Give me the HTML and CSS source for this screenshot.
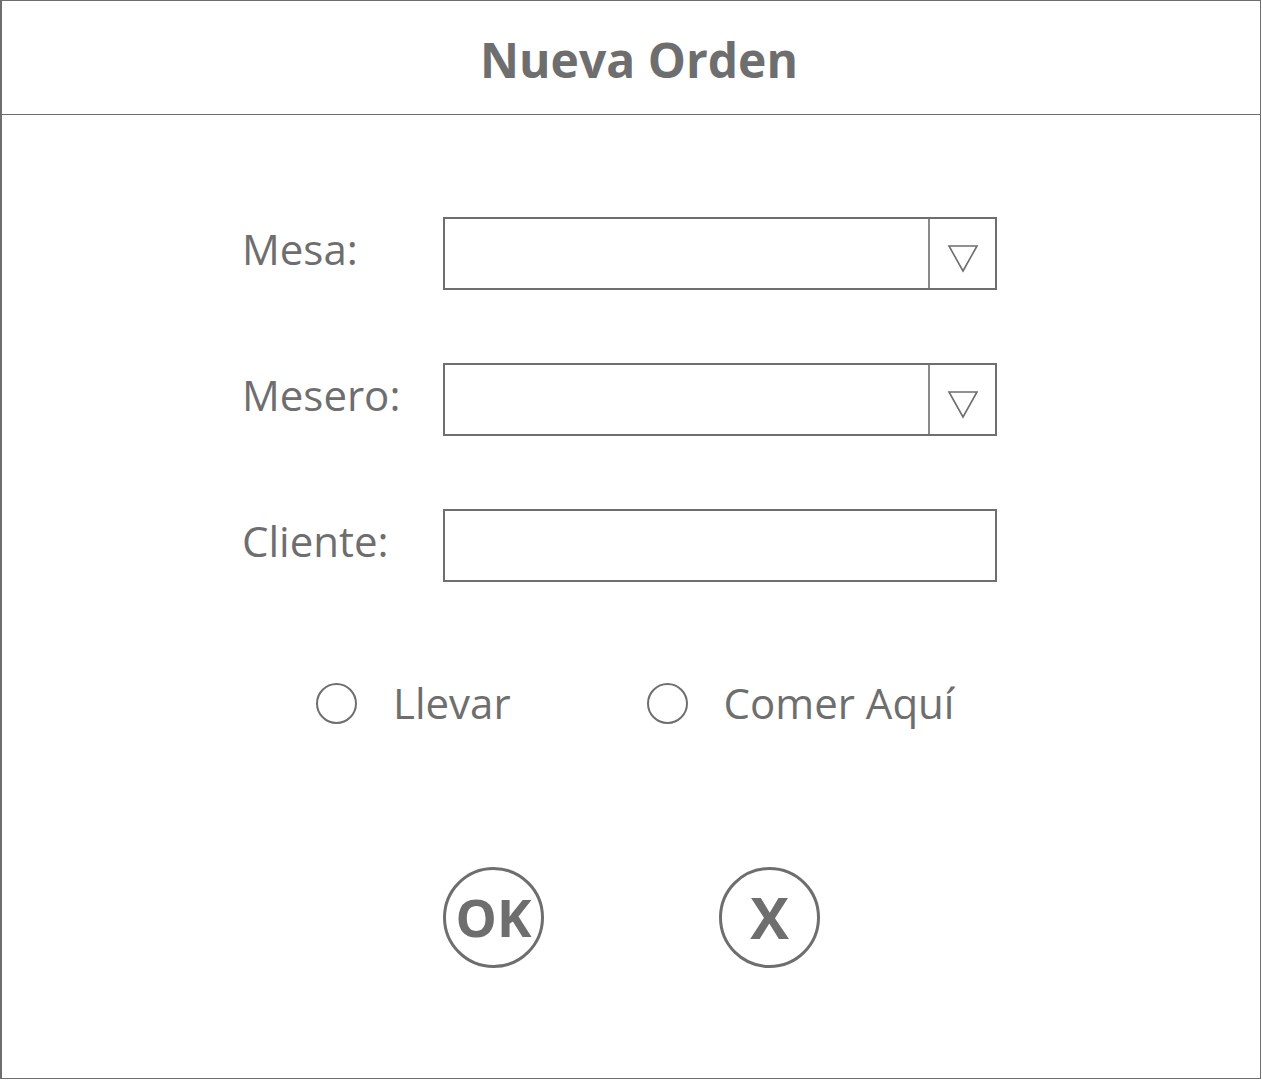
FILE: index.html
```html
<!DOCTYPE html>
<html lang="es">
<head>
<meta charset="utf-8">
<title>Nueva Orden</title>
<link rel="stylesheet" href="styles.css">
</head>
<body>
<div class="dialog">
  <header class="head"><h1 class="title">Nueva Orden</h1></header>
  <main class="content">
    <div class="form">
      <label class="label">Mesa:</label>
      <div class="field select">
        <div class="value"></div>
        <div class="arrow"><svg width="32" height="30" viewBox="0 0 32 30"><polygon points="2,3 30,3 16,28" fill="none" stroke="#6e6e6e" stroke-width="1.6" stroke-linejoin="miter"/></svg></div>
      </div>
      <label class="label">Mesero:</label>
      <div class="field select">
        <div class="value"></div>
        <div class="arrow"><svg width="32" height="30" viewBox="0 0 32 30"><polygon points="2,3 30,3 16,28" fill="none" stroke="#6e6e6e" stroke-width="1.6" stroke-linejoin="miter"/></svg></div>
      </div>
      <label class="label">Cliente:</label>
      <div class="field"></div>
    </div>
    <div class="radios">
      <div class="radio"><span class="dot"></span><span class="rtext">Llevar</span></div>
      <div class="radio second"><span class="dot"></span><span class="rtext">Comer Aquí</span></div>
    </div>
    <div class="buttons">
      <div class="btn">OK</div>
      <div class="btn btn-x">X</div>
    </div>
  </main>
</div>
</body>
</html>
```
FILE: styles.css
```css
* { box-sizing: border-box; }
html, body { margin: 0; padding: 0; background: #fff; }
body { font-family: "Open Sans", "Noto Sans", sans-serif; color: #6e6e6e; }
.dialog {
  width: 1261px;
  height: 1079px;
  border: 1px solid #6e6e6e;
  border-left-width: 2px;
  display: flex;
  flex-direction: column;
}
.head {
  height: 114px;
  border-bottom: 1px solid #6e6e6e;
  display: flex;
  align-items: center;
  justify-content: center;
}
.title {
  margin: 0;
  font-size: 48px;
  font-weight: 700;
  padding-left: 16px;
  padding-top: 4px;
}
.content { flex: 1; }
.form {
  margin-top: 102px;
  padding-left: 240px;
  display: grid;
  grid-template-columns: 201px 554px;
  row-gap: 73px;
  align-items: center;
}
.label {
  font-size: 42px;
  line-height: 73px;
  margin-top: -10px;
}
.field {
  height: 73px;
  border: 2px solid #6e6e6e;
  display: flex;
}
.value { flex: 1; }
.arrow {
  width: 67px;
  border-left: 2px solid #8a8a8a;
  display: flex;
  align-items: center;
  justify-content: center;
  padding-top: 8px;
}
.radios {
  margin-top: 100px;
  padding-left: 314px;
  display: flex;
  align-items: center;
  height: 42px;
}
.radio { display: flex; align-items: center; }
.radio.second { margin-left: 136px; }
.dot {
  width: 41px;
  height: 41px;
  border: 2px solid #6e6e6e;
  border-radius: 50%;
  display: inline-block;
}
.rtext {
  font-size: 42px;
  margin-left: 36px;
  line-height: 42px;
}
.buttons {
  margin-top: 143px;
  padding-left: 441px;
  display: flex;
  gap: 175px;
}
.btn {
  width: 101px;
  height: 101px;
  border: 3px solid #6e6e6e;
  border-radius: 50%;
  display: flex;
  align-items: center;
  justify-content: center;
  font-size: 52px;
  font-weight: 700;
  line-height: 1;
  padding-bottom: 2px;
}
.btn-x { font-size: 58px; }
```
